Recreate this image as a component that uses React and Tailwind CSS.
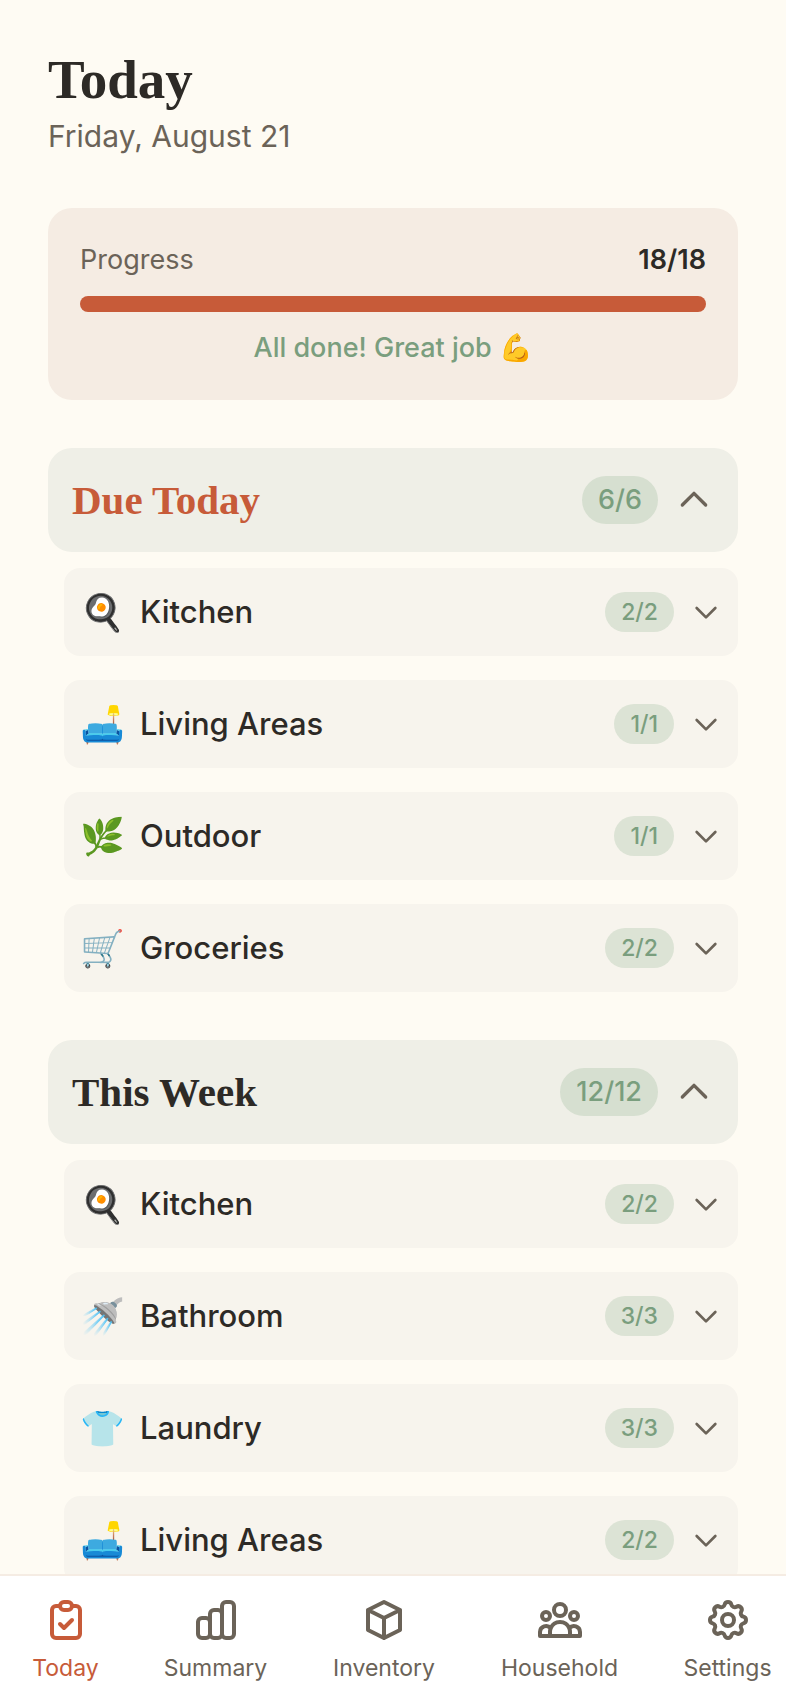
import { useState } from "react";

const groups = [
	{
		title: "Due Today",
		count: "6/6",
		color: "text-[#c75b39]",
		rooms: [
			{ icon: "🍳", name: "Kitchen", count: "2/2" },
			{ icon: "🛋️", name: "Living Areas", count: "1/1" },
			{ icon: "🌿", name: "Outdoor", count: "1/1" },
			{ icon: "🛒", name: "Groceries", count: "2/2" },
		],
	},
	{
		title: "This Week",
		count: "12/12",
		color: "text-[#2d2a26]",
		rooms: [
			{ icon: "🍳", name: "Kitchen", count: "2/2" },
			{ icon: "🚿", name: "Bathroom", count: "3/3" },
			{ icon: "👕", name: "Laundry", count: "3/3" },
			{ icon: "🛋️", name: "Living Areas", count: "2/2" },
		],
	},
];

const tabs = [
	{
		name: "Today",
		paths: ["M9 5H7a2 2 0 00-2 2v12a2 2 0 002 2h10a2 2 0 002-2V7a2 2 0 00-2-2h-2M9 5a2 2 0 002 2h2a2 2 0 002-2M9 5a2 2 0 012-2h2a2 2 0 012 2m-6 9l2 2 4-4"],
	},
	{
		name: "Summary",
		paths: ["M9 19v-6a2 2 0 00-2-2H5a2 2 0 00-2 2v6a2 2 0 002 2h2a2 2 0 002-2zm0 0V9a2 2 0 012-2h2a2 2 0 012 2v10m-6 0a2 2 0 002 2h2a2 2 0 002-2m0 0V5a2 2 0 012-2h2a2 2 0 012 2v14a2 2 0 01-2 2h-2a2 2 0 01-2-2z"],
	},
	{
		name: "Inventory",
		paths: ["M20 7l-8-4-8 4m16 0l-8 4m8-4v10l-8 4m0-10L4 7m8 4v10M4 7v10l8 4"],
	},
	{
		name: "Household",
		paths: ["M17 20h5v-2a3 3 0 00-5.356-1.857M17 20H7m10 0v-2c0-.656-.126-1.283-.356-1.857M7 20H2v-2a3 3 0 015.356-1.857M7 20v-2c0-.656.126-1.283.356-1.857m0 0a5.002 5.002 0 019.288 0M15 7a3 3 0 11-6 0 3 3 0 016 0zm6 3a2 2 0 11-4 0 2 2 0 014 0zM7 10a2 2 0 11-4 0 2 2 0 014 0z"],
	},
	{
		name: "Settings",
		paths: [
			"M10.325 4.317c.426-1.756 2.924-1.756 3.35 0a1.724 1.724 0 002.573 1.066c1.543-.94 3.31.826 2.37 2.37a1.724 1.724 0 001.065 2.572c1.756.426 1.756 2.924 0 3.35a1.724 1.724 0 00-1.066 2.573c.94 1.543-.826 3.31-2.37 2.37a1.724 1.724 0 00-2.572 1.065c-.426 1.756-2.924 1.756-3.35 0a1.724 1.724 0 00-2.573-1.066c-1.543.94-3.31-.826-2.37-2.37a1.724 1.724 0 00-1.065-2.572c-1.756-.426-1.756-2.924 0-3.35a1.724 1.724 0 001.066-2.573c-.94-1.543.826-3.31 2.37-2.37.996.608 2.296.07 2.572-1.065z",
			"M15 12a3 3 0 11-6 0 3 3 0 016 0z",
		],
	},
];

const Icon = ({ paths, className }) => (
	<svg
		className={className}
		viewBox="0 0 24 24"
		fill="none"
		stroke="currentColor"
		strokeWidth="2"
		strokeLinecap="round"
		strokeLinejoin="round"
		aria-hidden="true"
	>
		{paths.map((d) => <path key={d} d={d} />)}
	</svg>
);

const Room = ({ room }) => (
	<button type="button" className="flex h-22 w-full items-center rounded-2xl bg-[#f7f4ed] px-4 text-left">
		<span className="w-15 text-4xl">{room.icon}</span>
		<span className="flex-1 text-[31px] leading-12 font-medium text-[#2d2a26]">{room.name}</span>
		<span className="mr-4 rounded-full bg-[#dce3d5] px-4 py-1 text-[23px] leading-8 font-medium text-[#7a9e7e]">{room.count}</span>
		<Icon className="size-8 text-[#6b6358]" paths={["M19 9l-7 7-7-7"]} />
	</button>
);

const Group = ({ group }) => {
	const [open, setOpen] = useState(true);

	return (
		<section className="mt-12">
			<button
				type="button"
				aria-expanded={open}
				onClick={() => setOpen(!open)}
				className="flex h-26 w-full items-center rounded-3xl bg-[#efefe7] px-6 text-left"
			>
				<h2 className={"flex-1 font-['Liberation_Serif',serif] text-[41px] leading-14 font-bold " + group.color}>{group.title}</h2>
				<span className="mr-4 rounded-full bg-[#d6dfd0] px-4 py-1 text-[27px] leading-10 font-medium text-[#7a9e7e]">{group.count}</span>
				<Icon className="size-10 text-[#6b6358]" paths={[open ? "M5 15l7-7 7 7" : "M19 9l-7 7-7-7"]} />
			</button>
			{open && (
				<div className="mt-4 flex flex-col gap-6 pl-4">
					{group.rooms.map((room) => <Room key={room.name} room={room} />)}
				</div>
			)}
		</section>
	);
};

const App = () => {
	const [active, setActive] = useState("Today");

	return (
		<div className="flex h-screen flex-col bg-[#fefbf3] font-['Inter','Noto_Color_Emoji',sans-serif] text-[#2d2a26]">
			<main className="min-h-0 flex-1 overflow-y-auto px-12 pt-12 pb-12 [scrollbar-width:none]">
				<header>
					<h1 className="font-['Liberation_Serif',serif] text-[55px] leading-16 font-bold">Today</h1>
					<p className="text-[30px] leading-12 text-[#6b6358]">Friday, August 21</p>
				</header>

				<section className="mt-12 rounded-3xl bg-[#f5ece3] p-8">
					<div className="flex justify-between text-[27px] leading-10">
						<span className="text-[#6b6358]">Progress</span>
						<span className="font-semibold">18/18</span>
					</div>
					<div className="mt-4 h-4 rounded-full bg-[#c75b39]" />
					<p className="mt-4 text-center text-[27px] leading-10 font-medium text-[#7a9e7e]">All done! Great job 💪</p>
				</section>

				{groups.map((group) => <Group key={group.title} group={group} />)}
			</main>

			{/* Bottom tabs */}
			<nav className="grid shrink-0 grid-cols-[minmax(131px,131fr)_minmax(169px,169fr)_minmax(168px,168fr)_minmax(183px,183fr)_minmax(153px,153fr)] overflow-x-auto border-t-2 border-[#f5ece3] bg-white [scrollbar-width:none]">
				{tabs.map((tab) => (
					<button
						key={tab.name}
						type="button"
						onClick={() => setActive(tab.name)}
						className={"flex flex-col items-center gap-2 py-5 text-[23px] leading-8 " + (active === tab.name ? "text-[#c75b39]" : "text-[#6b6358]")}
					>
						<Icon className="size-12" paths={tab.paths} />
						{tab.name}
					</button>
				))}
			</nav>
		</div>
	);
};

export default App;
